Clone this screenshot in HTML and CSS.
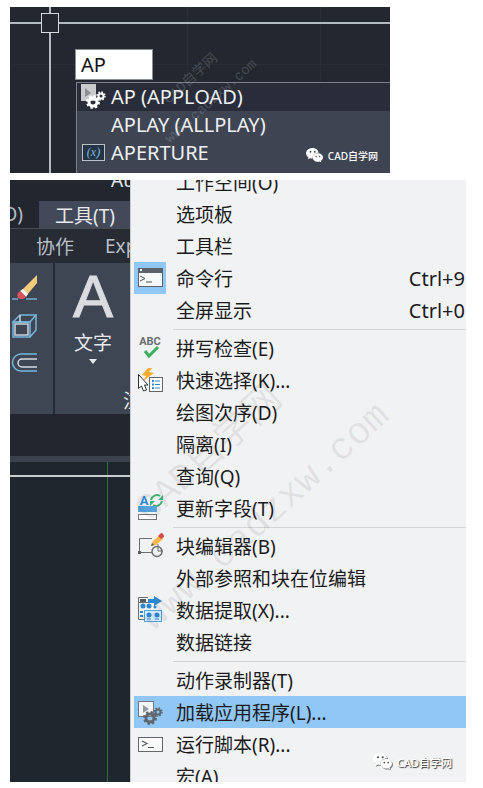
FILE: index.html
```
<!DOCTYPE html>
<html lang="zh-CN">
<head>
  <meta charset="UTF-8">
  <meta name="viewport" content="width=device-width, initial-scale=1">
  <title>CAD自学网 - APPLOAD</title>
  <link rel="stylesheet" href="styles.css">
</head>
<body>

<!-- shared icons -->
<svg class="defs" aria-hidden="true">
  <symbol id="gears" viewBox="0 0 20 18">
    <circle cx="7" cy="11" r="4" fill="none" stroke="currentColor" stroke-width="3"/>
    <circle cx="7" cy="11" r="6" fill="none" stroke="currentColor" stroke-width="2" stroke-dasharray="2.4 2.3"/>
    <circle cx="15" cy="5" r="2.5" fill="none" stroke="currentColor" stroke-width="2"/>
    <circle cx="15" cy="5" r="4" fill="none" stroke="currentColor" stroke-width="1.4" stroke-dasharray="1.6 1.54"/>
  </symbol>
  <symbol id="wechat" viewBox="0 0 18 16">
    <path d="M7 0C3 0 0 2.5 0 5.7c0 1.8 1 3.3 2.500 4.300L2 12l2.500-1.200c.8.2 1.600.4 2.500.4C6.600 7.600 9.500 5 13.500 5 12.800 2.100 10.200 0 7 0z" fill="currentColor"/>
    <path d="M12.500 5.700c-3.100 0-5.500 2-5.500 4.500s2.400 4.500 5.500 4.500c.7 0 1.300-.1 1.900-.3l1.900 1-.5-1.700c1.300-.8 2.200-2.100 2.200-3.500 0-2.500-2.400-4.500-5.500-4.500z" fill="currentColor"/>
    <g class="eyes"><circle cx="4.700" cy="4" r="1"/><circle cx="9.200" cy="4" r="1"/><circle cx="10.700" cy="9" r=".8"/><circle cx="14.400" cy="9" r=".8"/></g>
  </symbol>
</svg>

<main>
  <!-- command line -->
  <section class="shot command">
    <div class="crosshair"></div>
    <input class="command-input" type="text" value="AP" aria-label="命令">
    <ul class="suggestions">
      <li class="selected">
        <button>
          <svg width="26" height="26" viewBox="0 0 26 26">
            <path d="M1 1h15v17H1z" fill="#c9cacb"/>
            <path d="M5 5l6 5-6 4z" fill="#8b8d90"/>
            <use href="#gears" x="6" y="8" width="20" height="18" color="#fff"/>
          </svg>
          AP (APPLOAD)
        </button>
      </li>
      <li><button><svg width="26" height="26"></svg>APLAY (ALLPLAY)</button></li>
      <li>
        <button>
          <svg width="26" height="26" viewBox="0 0 26 26">
            <rect x="2.500" y="5.500" width="22" height="16" fill="#253445" stroke="#b9c0c8"/>
            <text x="13.500" y="17" text-anchor="middle" class="fx">(x)</text>
          </svg>
          APERTURE
        </button>
      </li>
    </ul>
    <div class="watermark small"><span>CAD自学网</span><span>www.cadzxw.com</span></div>
    <div class="badge light"><svg width="17" height="15"><use href="#wechat"/></svg>CAD自学网</div>
  </section>

  <!-- tools menu -->
  <section class="shot app">
    <div class="workspace">
      <div class="titlebar">Autodesk</div>
      <nav class="menubar"><button>(O)</button><button class="open">工具(T)</button></nav>
      <nav class="tabs"><button>协作</button><button>Express</button></nav>
      <div class="ribbon">
        <div class="modify">
          <svg width="28" height="28" viewBox="0 0 28 28">
            <path d="M2 26h6M16 26h11" stroke="#78a9cc" stroke-width="1.500"/>
            <path d="M12 17L27 2v8L17 22z" fill="#f4cb7c"/>
            <path d="M10 18l3-2 5 5-2 3z" fill="#f5f3f0"/>
            <path d="M10 18l6 6c-3 3-6 2-8 1-1-2-1-5 2-7z" fill="#d9535f"/>
          </svg>
          <svg width="28" height="28" viewBox="0 0 28 28" fill="none" stroke="#75b5dc" stroke-width="1.500">
            <path d="M3 11l7-7h16l-6 7zM20 26l6-7V4"/>
            <rect x="3" y="11" width="17" height="15"/>
            <rect x="5" y="13" width="13" height="11" stroke="#ccd5dc"/>
            <path d="M10 4v7" stroke="#ccd5dc"/>
          </svg>
          <svg width="28" height="28" viewBox="0 0 28 28" fill="none" stroke-width="1.500">
            <path d="M27 5H11a8 8 0 0 0 0 17h16" stroke="#75b5dc"/>
            <path d="M27 10H12a4 4 0 0 0 0 8h15" stroke="#d5dbe1"/>
          </svg>
        </div>
        <div class="annotate">
          <button class="text-tool"><b>A</b>文字<i></i></button>
          <span class="group-name">注释</span>
        </div>
      </div>
      <div class="filetabs"></div>
      <div class="canvas"></div>
    </div>

    <div class="menu">
      <ul>
        <li><button>工作空间(O)</button></li>
        <li><button>选项板</button></li>
        <li><button>工具栏</button></li>
        <li><button>
          <svg class="checked" width="32" height="32" viewBox="0 0 32 32">
            <rect x="4.500" y="6.500" width="24" height="18" fill="#f6f8fa" stroke="#5c6269"/>
            <path d="M4 6h25v5H4z" fill="#5c6269"/><path d="M6 7h2v2H6z" fill="#fff"/>
            <path d="M6 14l5 2.500L6 19M12 20h6" fill="none" stroke="#4c5158"/>
          </svg>命令行<kbd>Ctrl+9</kbd></button></li>
        <li><button>全屏显示<kbd>Ctrl+0</kbd></button></li>
        <li class="line"></li>
        <li><button>
          <svg width="32" height="32" viewBox="0 0 32 32">
            <text x="16" y="13" text-anchor="middle" class="abc">ABC</text>
            <path d="M11 19l4 5 9-9" fill="none" stroke="#3cae5e" stroke-width="3"/>
          </svg>拼写检查(E)</button></li>
        <li><button>
          <svg width="32" height="32" viewBox="0 0 32 32">
            <path d="M14 4l-6 7 4 1-3 5 11-8-5-1 3-4z" fill="#f4ad31"/>
            <rect x="15.500" y="13.500" width="13" height="14" fill="#fff" stroke="#62676c"/>
            <path d="M18 17h2m-2 3.500h2M18 24h2" stroke="#2c86c9" stroke-width="2"/>
            <path d="M21 17h5m-5 3.500h5M21 24h5" stroke="#2c86c9"/>
            <path d="M4.500 10.500v14l3-2.500 2 5 3-1-2-5h3.500z" fill="#fff" stroke="#333"/>
          </svg>快速选择(K)...</button></li>
        <li><button>绘图次序(D)</button></li>
        <li><button>隔离(I)</button></li>
        <li><button>查询(Q)</button></li>
        <li><button>
          <svg width="32" height="32" viewBox="0 0 32 32">
            <text x="10" y="13" text-anchor="middle" class="field">A</text>
            <path d="M17 8a6 6 0 0 1 9-4M28 9a6 6 0 0 1-9 4" fill="none" stroke="#48ad72" stroke-width="2"/>
            <path d="M29 3v5h-5zM16 14V9h5z" fill="#48ad72"/>
            <path d="M4 14h19v6H4z" fill="#55a2dc"/>
            <rect x="4.500" y="22.500" width="18" height="5" fill="#fff" stroke="#73777b"/>
          </svg>更新字段(T)</button></li>
        <li class="line"></li>
        <li><button>
          <svg width="32" height="32" viewBox="0 0 32 32">
            <path d="M18 8.500H5.500v14H18M24 14v7h5" fill="none" stroke="#6a6e72"/>
            <path d="M4 21h3v3H4z" fill="#5c6064"/>
            <circle cx="23" cy="21.500" r="5" fill="none" stroke="#6a6e72" stroke-width="1.500"/>
            <path d="M17 16l2-5 7-6 3 4-7 6z" fill="#f5b84c"/>
            <path d="M24 6l3-3c2 0 3 2 3 4l-3 2z" fill="#d94a4a"/>
            <path d="M17 16l1-3 2 2z" fill="#555"/>
          </svg>块编辑器(B)</button></li>
        <li><button>外部参照和块在位编辑</button></li>
        <li><button>
          <svg width="32" height="32" viewBox="0 0 32 32">
            <path d="M14 3.500H4.500v22H10M4 8.500h10" fill="none" stroke="#6a6e72"/>
            <path d="M6 5h6v3H6z" fill="#555b61"/>
            <path d="M14 5h6V2l8 5-8 5V9h-6z" fill="#2c86d1"/>
            <circle cx="9" cy="12" r="2.500" fill="#2c86d1"/><circle cx="15" cy="12" r="2.500" fill="#2c86d1"/><circle cx="21" cy="13" r="1.500" fill="#2c86d1"/>
            <path d="M6 17h3v2H6zM6 21h3v2H6z" fill="#2c86d1"/>
            <rect x="10.500" y="16.500" width="17" height="11" fill="#d6ebfa" stroke="#55a2dc"/>
            <circle cx="15" cy="21" r="2.500" fill="#2c86d1"/><circle cx="23" cy="21" r="2.500" fill="#2c86d1"/>
            <path d="M13 25h4m4 0h4" stroke="#2c86d1"/>
          </svg>数据提取(X)...</button></li>
        <li><button>数据链接</button></li>
        <li class="line"></li>
        <li><button>动作录制器(T)</button></li>
        <li class="active"><button>
          <svg width="32" height="32" viewBox="0 0 32 32">
            <rect x="4.500" y="5.500" width="15" height="15" fill="#f3f5f7" stroke="#74797f"/>
            <path d="M9 9l6 4-6 4z" fill="#92979c"/>
            <use href="#gears" x="9" y="11" width="20" height="18" color="#5f666e"/>
          </svg>加载应用程序(L)...</button></li>
        <li><button>
          <svg width="32" height="32" viewBox="0 0 32 32">
            <rect x="4.500" y="9.500" width="24" height="14" fill="#fafafa" stroke="#63676b"/>
            <path d="M8 13l5 2.500L8 18M14 19.500h6" fill="none" stroke="#55595d" stroke-width="1.200"/>
          </svg>运行脚本(R)...</button></li>
        <li><button>宏(A)</button></li>
      </ul>
    </div>
    <div class="watermark large"><span>CAD自学网</span><span>www.cadzxw.com</span></div>
    <div class="badge outline"><svg width="19" height="17"><use href="#wechat"/></svg>CAD自学网</div>
  </section>
</main>

</body>
</html>
```
FILE: styles.css
```
* {
  box-sizing: border-box;
}
body {
  margin: 0;
  background: #fff;
  font-family: "Noto Sans", "Noto Sans CJK SC", sans-serif;
  font-size: 19px;
}
main {
  display: flex;
  flex-direction: column;
  gap: 7px;
  padding: 7px 17px 6px 10px;
}
ul {
  list-style: none;
  margin: 0;
  padding: 0;
}
button {
  border: none;
  padding: 0;
  background: none;
  color: inherit;
  font: inherit;
  text-align: left;
  white-space: nowrap;
  cursor: pointer;
}
svg {
  flex: none;
}
.defs {
  position: absolute;
  width: 0;
  height: 0;
}
.shot {
  position: relative;
  overflow: hidden;
}

/* Command line */
.command {
  margin-right: 76px;
  padding: 42px 0 0 65px;
  color: #eef1f4;
  background:
    linear-gradient(#b4bac2, #b4bac2) 0 15px / 100% 2px no-repeat,
    linear-gradient(#b4bac2, #b4bac2) 39px 0 / 2px 100% no-repeat,
    linear-gradient(#292d35, #292d35) 0 57px / 100% 1px no-repeat,
    linear-gradient(#292d35, #292d35) 177px 0 / 1px 100% no-repeat,
    linear-gradient(#292d35, #292d35) 310px 0 / 1px 100% no-repeat,
    #23272f;
}
.crosshair {
  position: absolute;
  left: 31px;
  top: 6px;
  width: 18px;
  height: 20px;
  border: 1px solid #d5d9de;
  background: #23272f;
}
.command-input {
  display: block;
  width: 78px;
  height: 31px;
  border: 1px solid #8a8f96;
  padding: 0 5px;
  background: #fff;
  color: #111;
  font: inherit;
  font-size: 20px;
}
.suggestions {
  margin: 2px 0 0 1px;
  border: solid #7d838c;
  border-width: 1px 0 0 1px;
  padding-bottom: 6px;
  background: #3e4452;
}
.suggestions button {
  display: flex;
  align-items: center;
  gap: 5px;
  width: 100%;
  height: 28px;
  padding: 0 0 2px 3px;
  font-size: 20px;
}
.suggestions .selected {
  background: #292d3a;
}
.fx {
  fill: #7fb4dc;
  font: italic 12px "Liberation Serif", serif;
}

/* Workspace behind the menu */
.app {
  display: flex;
  background: #21262f;
}
.workspace {
  display: flex;
  flex-direction: column;
  width: 120px;
  overflow: hidden;
  color: #b9bec6;
}
.titlebar {
  height: 21px;
  padding-left: 101px;
  line-height: 1px;
  color: #e3e6ea;
}
.menubar {
  display: flex;
  height: 28px;
  border-bottom: 1px solid #454a54;
}
.menubar button:first-child {
  display: flex;
  justify-content: flex-end;
  width: 29px;
  padding-right: 16px;
}
.menubar .open {
  flex: 1;
  padding-left: 16px;
  background: #434959;
  color: #e6e9ed;
}
.tabs {
  display: flex;
  gap: 31px;
  height: 34px;
  padding-left: 26px;
  background: #262b34;
}
.ribbon {
  display: flex;
  height: 151px;
  background: #3e4654;
}
.modify {
  display: flex;
  flex: none;
  flex-direction: column;
  gap: 10px;
  width: 45px;
  padding-top: 10px;
  border-right: 2px solid #252b36;
}
.annotate {
  display: flex;
  flex-direction: column;
  flex: 1;
  padding: 2px 0 0 18px;
  color: #e6e9ed;
}
.text-tool {
  display: flex;
  flex-direction: column;
  align-items: center;
  width: 40px;
  line-height: 28px;
}
.text-tool b {
  font: 60px/64px "Liberation Sans", sans-serif;
  color: #dadcdf;
  -webkit-text-stroke: 1px #dadcdf;
}
.text-tool i {
  margin-top: 2px;
  border: 4px solid transparent;
  border-top: 5px solid #e6e9ed;
}
.group-name {
  margin: 18px 0 0 50px;
  line-height: 30px;
  white-space: nowrap;
}
.filetabs {
  height: 48px;
  border-bottom: 6px solid #3b414d;
}
.canvas {
  flex: 1;
  background:
    linear-gradient(#c9cdd2, #c9cdd2) 0 13px / 100% 2px no-repeat,
    linear-gradient(#26703a, #26703a) 97px 0 / 1px 100% no-repeat,
    #20262e;
}

/* Tools menu */
.menu {
  flex: 1;
  border-left: 1px solid #c8cbd0;
  padding-left: 3px;
  background: #f1f2f3;
  color: #1b1b1b;
}
.menu ul {
  margin: -14px 0 -10px;
}
.menu button {
  display: flex;
  align-items: center;
  width: 100%;
  height: 32px;
  padding-left: 42px;
}
.menu svg {
  margin: 0 10px 0 -42px;
}
.menu .checked,
.menu .active {
  background: #91c7f5;
}
.menu kbd {
  margin-left: auto;
  padding-right: 1px;
  font: inherit;
  font-size: 20px;
}
.menu .line {
  height: 1px;
  margin: 3px 0 2px 39px;
  background: #d2d3d5;
}
.abc {
  fill: #6a6e72;
  font: bold 11px Roboto, sans-serif;
}
.field {
  fill: #2c86d1;
  font: bold 13px Roboto, sans-serif;
}

/* Watermarks */
.watermark {
  position: absolute;
  display: flex;
  flex-direction: column;
  text-align: center;
  font-family: "Liberation Mono", "Noto Sans CJK SC", monospace;
  white-space: nowrap;
  pointer-events: none;
  transform: rotate(-42deg);
}
.watermark.small {
  left: 132px;
  top: 53px;
  font-size: 14px;
  line-height: 30px;
  color: rgba(190, 195, 202, 0.24);
}
.watermark.large {
  left: 68px;
  top: 222px;
  font-size: 38px;
  line-height: 84px;
  color: rgba(60, 60, 70, 0.09);
}
.badge {
  position: absolute;
  display: flex;
  align-items: center;
  gap: 5px;
  font-weight: 500;
  color: #fff;
}
.badge.light {
  right: 12px;
  bottom: 10px;
  font-size: 10px;
}
.badge.outline {
  right: 14px;
  bottom: 12px;
  font-size: 11px;
  text-shadow: 1px 1px 1px #333;
}
.badge.outline svg {
  filter: drop-shadow(1px 1px 0 #777);
}
.eyes {
  fill: #454b57;
}
```
